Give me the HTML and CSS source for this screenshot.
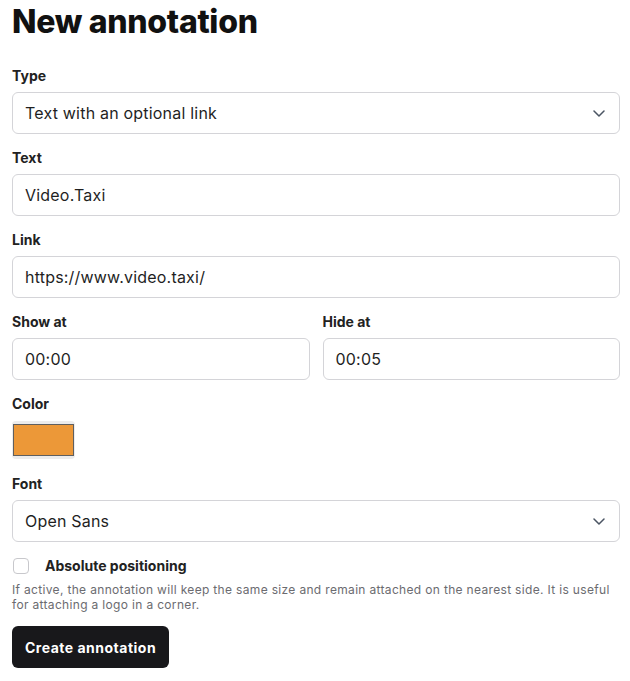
FILE: index.html
```html
<!DOCTYPE html>
<html lang="en">
<head>
    <meta charset="UTF-8">
    <meta name="viewport" content="width=device-width, initial-scale=1.0">
    <title>New annotation</title>
    <link rel="stylesheet" href="styles.css">
</head>
<body>
    <h1 class="title">New annotation</h1>

    <form class="annotation-form" onsubmit="return false">
        <div class="field">
            <label class="label" for="type">Type</label>
            <div class="select-wrap">
                <select id="type" class="control">
                    <option>Text with an optional link</option>
                    <option>Image</option>
                </select>
                <svg class="chevron" width="12" height="7" viewBox="0 0 12 7" fill="none">
                    <path d="M1 1l5 5 5-5" stroke="#4b5563" stroke-width="1.5" stroke-linecap="round" stroke-linejoin="round"/>
                </svg>
            </div>
        </div>

        <div class="field">
            <label class="label" for="text">Text</label>
            <input type="text" id="text" class="control" value="Video.Taxi">
        </div>

        <div class="field">
            <label class="label" for="link">Link</label>
            <input type="text" id="link" class="control" value="https://www.video.taxi/">
        </div>

        <div class="field-row">
            <div class="field">
                <label class="label" for="showAt">Show at</label>
                <input type="text" id="showAt" class="control" value="00:00">
            </div>
            <div class="field">
                <label class="label" for="hideAt">Hide at</label>
                <input type="text" id="hideAt" class="control" value="00:05">
            </div>
        </div>

        <div class="field field-color">
            <span class="label">Color</span>
            <div class="color-picker">
                <span class="color-fill"></span>
            </div>
        </div>

        <div class="field">
            <label class="label" for="font">Font</label>
            <div class="select-wrap">
                <select id="font" class="control">
                    <option>Open Sans</option>
                    <option>Roboto</option>
                </select>
                <svg class="chevron" width="12" height="7" viewBox="0 0 12 7" fill="none">
                    <path d="M1 1l5 5 5-5" stroke="#4b5563" stroke-width="1.5" stroke-linecap="round" stroke-linejoin="round"/>
                </svg>
            </div>
        </div>

        <div class="checkbox-row">
            <input type="checkbox" id="absolute" class="checkbox">
            <label class="checkbox-label" for="absolute">Absolute positioning</label>
        </div>
        <p class="help">If active, the annotation will keep the same size and remain attached on the nearest side. It is useful for attaching a logo in a corner.</p>

        <button type="submit" class="btn">Create annotation</button>
    </form>
</body>
</html>
```

FILE: styles.css
```css
* {
    box-sizing: border-box;
    margin: 0;
    padding: 0;
}

body {
    font-family: Inter, "Noto Sans", sans-serif;
    color: #1f1f1f;
    background-color: #ffffff;
    padding: 2px 10px 0 12px;
}

.title {
    font-size: 32px;
    line-height: 40px;
    font-weight: 800;
    letter-spacing: -0.3px;
    color: #111111;
    margin-bottom: 24px;
}

.field {
    display: flex;
    flex-direction: column;
    margin-bottom: 14px;
}

.field-row {
    display: grid;
    grid-template-columns: 1fr 1fr;
    gap: 13px;
}

.label {
    font-size: 14px;
    line-height: 20px;
    font-weight: 700;
    color: #222222;
    margin-bottom: 6px;
}

.control {
    width: 100%;
    height: 42px;
    padding: 0 12px;
    font-family: inherit;
    font-size: 16px;
    letter-spacing: 0.2px;
    color: #1f1f1f;
    background-color: #ffffff;
    border: 1px solid #d4d4d8;
    border-radius: 6px;
    outline: none;
}

.select-wrap {
    position: relative;
}

select.control {
    appearance: none;
    -webkit-appearance: none;
}

.chevron {
    position: absolute;
    right: 15px;
    top: 18px;
    pointer-events: none;
}

.field-color {
    margin-bottom: 15px;
}

.field-color .label {
    margin-bottom: 7px;
}

.color-picker {
    display: flex;
    width: 63px;
    height: 38px;
    padding: 3px 1px;
    border-radius: 4px;
    background-color: #ececec;
    cursor: pointer;
}

.color-fill {
    flex: 1;
    background-color: #ec9838;
    border: 1px solid #5f5f5f;
}

.checkbox-row {
    display: flex;
    align-items: center;
    gap: 16px;
    margin-top: 0;
}

.checkbox {
    -webkit-appearance: none;
    appearance: none;
    width: 16px;
    height: 16px;
    margin-left: 1px;
    border: 1px solid #c8c8cc;
    border-radius: 4px;
    background-color: #ffffff;
}

.checkbox-label {
    font-size: 14px;
    line-height: 20px;
    font-weight: 700;
    color: #222222;
}

.help {
    font-size: 12px;
    line-height: 15px;
    letter-spacing: 0.33px;
    color: #6b6b70;
    margin-top: 6px;
}

.btn {
    margin-top: 14px;
    height: 42px;
    padding: 0 13px;
    font-family: inherit;
    font-size: 14px;
    font-weight: 700;
    letter-spacing: 0.5px;
    color: #ffffff;
    background-color: #18181b;
    border: none;
    border-radius: 6px;
    cursor: pointer;
}

.btn:hover {
    background-color: #27272a;
}
```
